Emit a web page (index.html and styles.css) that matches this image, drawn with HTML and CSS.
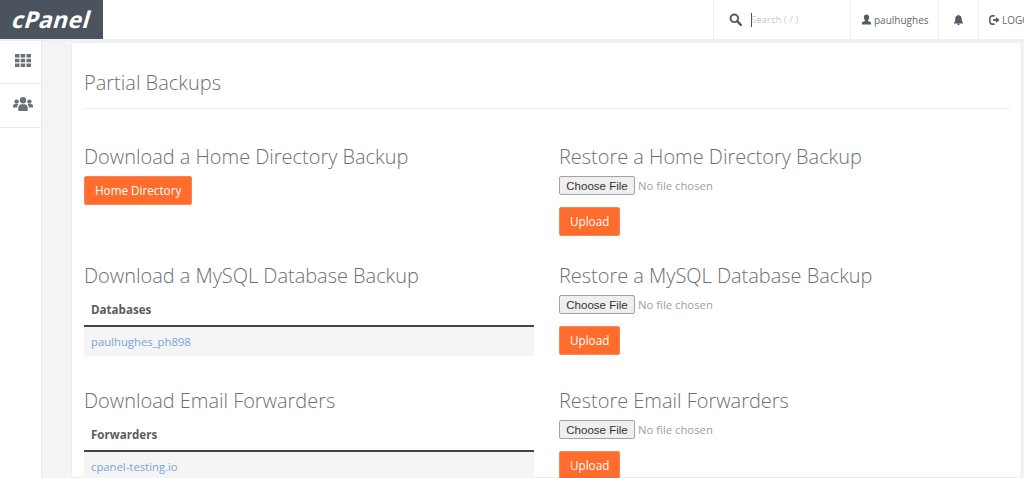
FILE: index.html
```html
<!DOCTYPE html>
<html lang="en">
<head>
<meta charset="utf-8">
<title>Partial Backups</title>
<link rel="stylesheet" href="styles.css">
</head>
<body>
<header class="topbar">
  <div class="logo"><span class="logo-text">cPanel</span></div>
  <div class="topbar-right">
    <div class="search">
      <svg class="search-icon" viewBox="0 0 16 16" width="13" height="13"><circle cx="6.500" cy="6.500" r="4.700" fill="none" stroke="#535d67" stroke-width="2.400"/><path d="M10 10l4.600 4.600" stroke="#535d67" stroke-width="3" stroke-linecap="round"/></svg>
      <span class="caret"></span><span class="search-text">Search ( / )</span>
    </div>
    <div class="top-item user">
      <svg viewBox="0 0 12 12" width="11" height="11"><path d="M6 .5c1.800 0 2.900 1.400 2.900 3.200 0 1.300-.6 2.500-1.400 3.100v.9c1.500.5 3.500 1 3.500 2.300v1.500H1V10c0-1.300 2-1.800 3.500-2.300v-.9C3.700 6.200 3.100 5 3.100 3.700 3.100 1.900 4.200.5 6 .5z" fill="#535d67"/></svg>
      <span>paulhughes</span>
    </div>
    <div class="top-item bell">
      <svg viewBox="0 0 12 12" width="11" height="12"><path d="M6 .3c.5 0 .8.300.8.800 1.700.3 2.700 1.600 2.700 3.400 0 2.500.5 3.500 1.500 4.500v.8H1v-.8c1-1 1.500-2 1.500-4.500 0-1.800 1-3.100 2.700-3.400 0-.5.300-.8.800-.8zM4.600 10.200h2.800c0 .9-.6 1.500-1.400 1.500s-1.400-.6-1.400-1.500z" fill="#535d67"/></svg>
    </div>
    <div class="top-item logout">
      <svg viewBox="0 0 12 12" width="11" height="12"><path d="M6 1.500H3.500C2.200 1.500 1 2.500 1 4v4c0 1.500 1.200 2.500 2.500 2.500H6" fill="none" stroke="#535d67" stroke-width="1.700"/><path d="M4.500 4.800h3V2.800L11.500 6l-4 3.200v-2h-3z" fill="#535d67"/></svg>
      <span>LOGOUT</span>
    </div>
  </div>
</header>
<div class="shell">
  <nav class="sidebar">
    <div class="side-item">
      <svg viewBox="0 0 16 13" width="16" height="13"><path d="M0 0h4.500v3.500H0zM5.700 0h4.500v3.500H5.700zM11.500 0H16v3.500h-4.500zM0 4.700h4.500v3.500H0zM5.700 4.700h4.500v3.500H5.700zM11.500 4.700H16v3.500h-4.500zM0 9.500h4.500V13H0zM5.700 9.500h4.500V13H5.700zM11.500 9.500H16V13h-4.500z" fill="#6a7279"/></svg>
    </div>
    <div class="side-item">
      <svg viewBox="0 0 20 14" width="20" height="14"><g fill="#6a7279"><circle cx="10" cy="3.300" r="3.200"/><circle cx="3.600" cy="4.600" r="2.200"/><circle cx="16.400" cy="4.600" r="2.200"/><path d="M5.300 14v-3.300c0-2 1.500-3.400 3-3.400h3.400c1.500 0 3 1.400 3 3.400V14z"/><path d="M0 10.500V9c0-1.200.8-2 2-2h2.500c.3 0 .6.100.9.300C4.500 8.200 4.200 9 4.200 10.500z"/><path d="M20 10.500V9c0-1.200-.8-2-2-2h-2.500c-.3 0-.6.100-.9.300.9.900 1.200 1.700 1.200 3.200z"/></g></svg>
    </div>
  </nav>
  <main class="panel">
    <h1 class="page-title">Partial Backups</h1>
    <div class="grid">
      <section class="cell cell-home">
        <h2>Download a Home Directory Backup</h2>
        <a class="btn" href="#">Home Directory</a>
      </section>
      <section class="cell cell-home">
        <h2>Restore a Home Directory Backup</h2>
        <div class="file"><span class="file-btn">Choose File</span><span class="file-text">No file chosen</span></div>
        <a class="btn" href="#">Upload</a>
      </section>
      <section class="cell">
        <h2>Download a MySQL Database Backup</h2>
        <div class="table-head">Databases</div>
        <div class="table-row"><a href="#">paulhughes_ph898</a></div>
      </section>
      <section class="cell">
        <h2>Restore a MySQL Database Backup</h2>
        <div class="file"><span class="file-btn">Choose File</span><span class="file-text">No file chosen</span></div>
        <a class="btn" href="#">Upload</a>
      </section>
      <section class="cell">
        <h2>Download Email Forwarders</h2>
        <div class="table-head">Forwarders</div>
        <div class="table-row"><a href="#">cpanel-testing.io</a></div>
      </section>
      <section class="cell">
        <h2>Restore Email Forwarders</h2>
        <div class="file"><span class="file-btn">Choose File</span><span class="file-text">No file chosen</span></div>
        <a class="btn" href="#">Upload</a>
      </section>
    </div>
  </main>
</div>
</body>
</html>
```
FILE: styles.css
```css
* { box-sizing: border-box; }
html, body { margin: 0; height: 478px; overflow: hidden; }
body { font-family: "Open Sans", sans-serif; color: #5a636b; background: #fff; display: flex; flex-direction: column; }
.topbar { height: 41px; flex: none; display: flex; justify-content: space-between; border-bottom: 2px solid #eef0f0; background: #fff; }
.logo { width: 103px; height: 39px; background: #4a535e; color: #fff; font-weight: 700; font-size: 23px; line-height: 39px; text-align: center; }
.logo-text { display: inline-block; transform: skewX(-16deg); letter-spacing: .3px; }
.topbar-right { display: flex; width: 311px; overflow: hidden; }
.search { width: 138px; flex: none; display: flex; align-items: center; padding-left: 15px; border-left: 1px solid #eef0f0; border-right: 1px solid #eef0f0; }
.search-icon { margin-right: 9px; }
.caret { width: 1px; height: 14px; background: #4a535e; margin-right: -1px; }
.search-text { font-size: 9.500px; color: #a9aeb2; font-weight: 300; letter-spacing: .2px; }
.top-item { flex: none; display: flex; align-items: center; gap: 2px; font-size: 10px; color: #62696f; border-right: 1px solid #eef0f0; }
.top-item svg { flex: none; }
.user { width: 88px; padding-left: 10px; }
.bell { width: 40px; justify-content: center; }
.logout { padding-left: 10px; width: 60px; border-right: 0; }
.shell { flex: 1; display: flex; min-height: 0; background: #f3f4f4; }
.sidebar { width: 42px; flex: none; background: #fff; border-right: 1px solid #e9ebeb; }
.side-item { height: 44px; display: flex; align-items: center; justify-content: center; border-bottom: 1px solid #e9ebeb; padding: 0 0 4px 4px; }
.side-item:first-child { height: 43px; }
.panel { width: 951px; margin: 1px 0 0 29px; background: #fff; border: 1px solid #eceeee; border-radius: 3px; padding: 0 0 0 12px; }
.page-title { margin: 0; width: 926px; height: 66px; padding-top: 26px; font-size: 20px; line-height: 28px; font-weight: 300; color: #6a7074; border-bottom: 1px solid #eceeee; }
.grid { display: grid; grid-template-columns: 475px 451px; }
.cell { height: 124.500px; padding-top: 34px; }
.cell-home { height: 119px; }
h2 { margin: 0 0 5px; font-size: 19.950px; line-height: 28px; font-weight: 300; color: #6a7074; }
.btn { display: inline-block; height: 29px; padding: 0 10px; background: #ff6c2c; border: 1px solid #f7865a; border-radius: 2px; color: #fff; font-size: 11.700px; line-height: 27px; text-decoration: none; }
.table-head { width: 450px; height: 32px; border-bottom: 2px solid #444; padding: 0 7px; font-size: 11.600px; font-weight: 700; line-height: 29px; color: #5c5c5c; }
.table-row { width: 450px; height: 29px; padding: 0 7px; background: #f5f5f5; font-size: 11.300px; line-height: 29px; }
.table-row a { color: #7aa3d8; text-decoration: none; }
.file { display: flex; align-items: center; height: 19px; margin-bottom: 12px; }
.file-btn { width: 76px; height: 19px; background: #efefef; border: 1px solid #a3a3a3; border-radius: 2px; font-family: "Liberation Sans", sans-serif; font-size: 11.500px; line-height: 18px; text-align: center; color: #333; }
.file-text { margin-left: 3px; font-size: 11.300px; color: #9a9fa3; }
```
